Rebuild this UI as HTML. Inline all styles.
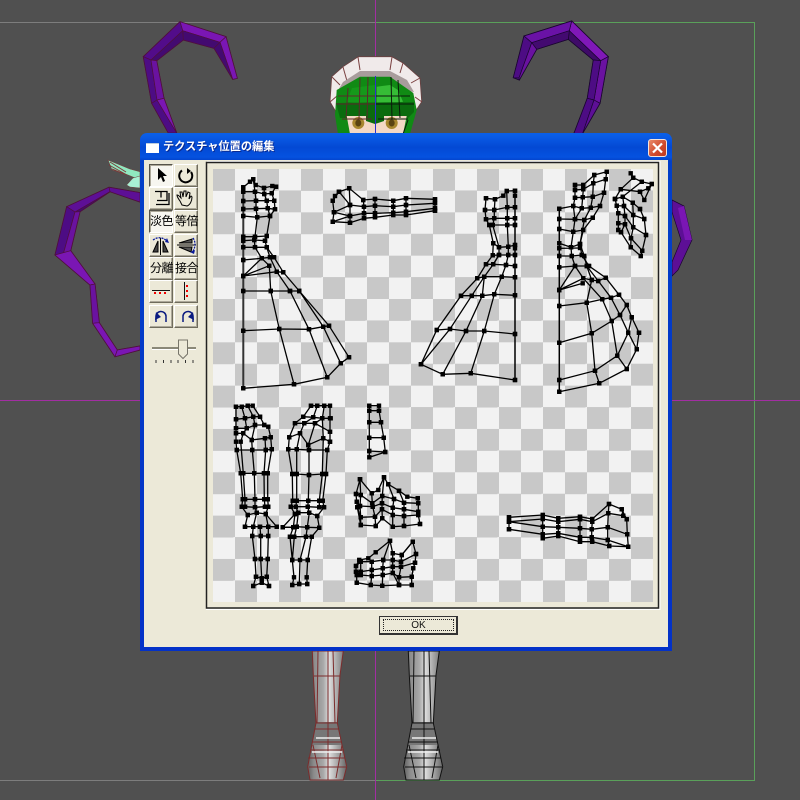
<!DOCTYPE html>
<html><head><meta charset="utf-8"><style>
html,body{margin:0;padding:0;background:#505050;width:800px;height:800px;overflow:hidden}
body{filter:blur(.3px)}
svg{position:absolute;left:0;top:0}
.m path{fill:none;stroke:#000;stroke-width:1.3;marker-start:url(#n);marker-mid:url(#n);marker-end:url(#n)}
.b{position:absolute;box-sizing:border-box;width:24px;height:23px;background:#ece9d8;border:1px solid;border-color:#fff #6f6c5c #6f6c5c #fff;box-shadow:inset -1px -1px 0 #aca899;font:12px/21px "Liberation Sans","Noto Sans CJK JP",sans-serif;text-align:center;color:#000;white-space:nowrap;letter-spacing:-.5px}
.p{background:#f7f6f0;border-color:#55534a #fff #fff #55534a;box-shadow:inset 1px 1px 0 #aca899}
</style></head><body>
<svg width="800" height="800" viewBox="0 0 800 800" style="z-index:1">
<defs>
<linearGradient id="lg" x1="0" x2="1" y1="0" y2="0"><stop offset="0" stop-color="#5f5f5f"/><stop offset=".15" stop-color="#8a8a8a"/><stop offset=".4" stop-color="#a8a8a8"/><stop offset=".55" stop-color="#dedede"/><stop offset=".85" stop-color="#909090"/><stop offset="1" stop-color="#666"/></linearGradient>
</defs>
<rect width="800" height="800" fill="#505050"/>
<path d="M0 22.5H375" stroke="#7d7d7d" fill="none"/>
<path d="M375 22.5H754.5V780.5H375" stroke="#5aa05a" fill="none"/>
<path d="M0 780.5H375" stroke="#7d7d7d" fill="none"/>
<path d="M375.5 0V800M0 400.5H800" stroke="#a22ea2" fill="none"/>

<!-- left upper horn -->
<polygon points="180,21.7 226,36.7 237.3,78.3 232.7,79.3 214,48.3 183.3,40 156.7,60.7 164,98.3 176.7,133 168.3,133 151.7,103.3 143.3,56.7" fill="#5d0f96" stroke="#50103c"/>
<g stroke="#50103c" stroke-width=".7">
<polygon points="180,21.7 226,36.7 220,42.3 182.7,30.7" fill="#7a16b4"/>
<polygon points="182.7,30.7 220,42.3 214,48.3 183.3,40" fill="#430a70"/>
<polygon points="226,36.7 237.3,78.3 232.7,79.3 220,42.3" fill="#7a16b4"/>
<polygon points="220,42.3 232.7,79.3 214,48.3" fill="#430a70"/>
<polygon points="143.3,56.7 180,21.7 182.7,30.7 151,60" fill="#520c8a"/>
<polygon points="151,60 182.7,30.7 183.3,40 156.7,60.7" fill="#430a70"/>
<polygon points="143.3,56.7 151,60 157,100 151.7,103.3" fill="#4d0c84"/>
<polygon points="151,60 156.7,60.7 164,98.3 157,100" fill="#6a12a0"/>
<polygon points="151.7,103.3 157,100 176.7,133 168.3,133" fill="#4d0c84"/>
<polygon points="157,100 164,98.3 176.7,133" fill="#7a16b4"/>
</g>
<!-- left lower horn -->
<polygon points="109,187.3 140,192.7 140,202 110,191.7 80,211.7 70.7,250.7 95,284 99.3,322.7 117.3,350 140,346 140,350 115,356.7 92.7,323.3 90,285 55,255 66.7,206.7" fill="#5d0f96" stroke="#50103c"/>
<g stroke="#50103c" stroke-width=".7">
<polygon points="109,187.3 140,192.7 140,202 110,191.7" fill="#5d0f96"/>
<polygon points="66.7,206.7 109,187.3 110,191.7 75,212" fill="#5d0f96"/>
<polygon points="75,212 110,191.7 80,211.7" fill="#430a70"/>
<polygon points="66.7,206.7 75,212 63,255 55,255" fill="#4d0c84"/>
<polygon points="75,212 80,211.7 70.7,250.7 63,255" fill="#6a12a0"/>
<polygon points="55,255 70.7,250.7 95,284 90,285" fill="#7a16b4"/>
<polygon points="90,285 95,284 99.3,322.7 92.7,323.3" fill="#6a12a0"/>
<polygon points="92.7,323.3 99.3,322.7 117.3,350 115,356.7" fill="#7a16b4"/>
<polygon points="115,356.7 117.3,350 140,346 140,350" fill="#7a16b4"/>
</g>
<!-- hand -->
<polygon points="108,160 130,169 140,171.7 140,180 128,175 112,170" fill="#90e8c0" stroke="#704040" stroke-width=".6"/>
<polygon points="126.7,185 133,178 140,176 140,188 130,187" fill="#a8f0d4" stroke="#704040" stroke-width=".5"/>
<path d="M110 162l16 10M109 165l18 10M112 169l12 5" stroke="#7a3a3a" fill="none"/>
<!-- right upper horn -->
<polygon points="571.7,21 608.3,56.7 600,103.3 582.7,133.3 574,133.3 587.3,98.3 593.3,60 568.3,39.3 536.7,49.3 519.3,80 513.3,77.7 524,36" fill="#5d0f96" stroke="#1a0530"/>
<g stroke="#1a0530" stroke-width=".7">
<polygon points="571.7,21 608.3,56.7 600.7,60.7 569.3,30.7" fill="#8018b8"/>
<polygon points="569.3,30.7 600.7,60.7 593.3,60 568.3,39.3" fill="#3f0a68"/>
<polygon points="524,36 571.7,21 569.3,30.7 531.7,42.7" fill="#6a12a6"/>
<polygon points="531.7,42.7 569.3,30.7 568.3,39.3 536.7,49.3" fill="#430a70"/>
<polygon points="524,36 531.7,42.7 519,78 513.3,77.7" fill="#4d0c84"/>
<polygon points="531.7,42.7 536.7,49.3 519.3,80 519,78" fill="#6a12a0"/>
<polygon points="600.7,60.7 608.3,56.7 600,103.3 594,100" fill="#6a12a0"/>
<polygon points="593.3,60 600.7,60.7 594,100 587.3,98.3" fill="#4d0c84"/>
<polygon points="587.3,98.3 594,100 582.7,133.3 574,133.3" fill="#4d0c84"/>
<polygon points="594,100 600,103.3 582.7,133.3" fill="#5d0f96"/>
</g>
<!-- right lower horn -->
<polygon points="672,200 684,206 692,240 678,270 672,276 672,262 681,240 672,212" fill="#5d0f96" stroke="#1a0530" stroke-width=".7"/>
<polygon points="684,206 692,240 685,240 678,208" fill="#7a16b4"/>

<!-- head -->
<polygon points="331.700,76.700 343,66.700 358.300,56.700 391.700,56.700 403,63 420,78 421.700,101.700 415,112 336,112 330,101.700" fill="#f0eaea" stroke="#6a4040" stroke-width=".8"/>
<path d="M343 67l4 14M358 57l2 13M392 57l-2 13M403 63l-3 10M420 78l-9 5M332 77l8 8M330 102l7-6M422 102l-7-5" stroke="#7a4040" fill="none"/>
<polygon points="343,82 360,71 390,71 407,80 414,92 360,84 337,92" fill="#a89c9c"/>
<polygon points="336.700,90 360,76.700 390,76.700 413.300,93 416.700,110 410,134 338,134 335,115" fill="#108a14"/>
<polygon points="376.700,86.700 390,85 398,90 403,101.700 376.700,105" fill="#36bc36"/>
<polygon points="346.700,101.700 352,88 375,85 375,105" fill="#15991a"/>
<polygon points="336,103 414,102 414,112 408,118 340,118" fill="#0b6b0e"/>
<polygon points="346.700,116 406.700,116 403,134 350,134" fill="#f4d8c4"/>
<polygon points="366,121 375,124 384,121 384,110 366,110" fill="#0b6b0e"/>
<ellipse cx="358.300" cy="123" rx="6" ry="6" fill="#a8862e"/><ellipse cx="358.300" cy="123" rx="3" ry="3.500" fill="#5a4212"/>
<ellipse cx="391.700" cy="123" rx="6" ry="6" fill="#a8862e"/><ellipse cx="391.700" cy="123" rx="3" ry="3.500" fill="#5a4212"/>
<path d="M348 88l-2 30M360 78l-1 41M368 77l-1 42M338 96h38M336 104h40M342 119h30" stroke="#5a2a2a" fill="none"/>
<path d="M376 96h34M376 104h38M378 119h30M391 77l1 42M398 80l2 38M408 120l-5 14" stroke="#0a1a0a" fill="none"/>
<path d="M375.500 76V134" stroke="#3030d0"/>

<!-- legs -->
<polygon points="312.3,651 343.3,651 340,675 337.3,723 346.7,766.7 343.3,780 310,780 307.7,766.7 316,723 313.3,675" fill="url(#lg)"/>
<polygon points="316,722 337,722 342,745 312,745" fill="#777"/>
<g fill="none" stroke="#7c2c2c">
<polygon points="312.3,651 343.3,651 340,675 337.3,723 346.7,766.7 343.3,780 310,780 307.7,766.7 316,723 313.3,675"/>
<path d="M314 676H340M316 723H338M315 729H339M312 742H342M310 750H344M308 758H345M309 767H346M318 651L317 723M328 651V780M333 651L335 723M313 745L320 778M342 745L336 778"/>
</g>
<path d="M316 738H340M312 752H342" stroke="#eee" stroke-width="1.500"/>
<polygon points="408.300,651 439.300,651 436,675 433.300,723 442.700,766.700 439.300,780 406,780 403.700,766.700 412,723 409.300,675" fill="url(#lg)"/>
<polygon points="412,722 433,722 438,745 408,745" fill="#777"/>
<g fill="none" stroke="#111">
<polygon points="408.300,651 439.300,651 436,675 433.300,723 442.700,766.700 439.300,780 406,780 403.700,766.700 412,723 409.300,675"/>
<path d="M410 676H436M412 723H434M411 729H435M408 742H438M406 750H440M404 758H441M405 767H442M414 651L413 723M424 651V780M429 651L431 723M409 745L416 778M438 745L432 778"/>
</g>
<path d="M412 738H436M408 752H438" stroke="#eee" stroke-width="1.500"/>
</svg>

<!-- dialog -->
<div style="position:absolute;z-index:2;left:140px;top:133px;width:532px;height:518px;box-sizing:border-box;border-radius:7px 7px 0 0;background:linear-gradient(#0a5fe8 0,#0a5ce6 3px,#0349d4 14px,#0552e0 24px,#0340c8 28px,#0331c8 100%)"></div>
<div style="position:absolute;z-index:2;left:144px;top:160px;width:524px;height:487px;background:#ece9d8"></div>
<div style="position:absolute;z-index:2;left:146px;top:143px;width:13px;height:9px;background:#fff;border-top:1px solid #bcd"></div>
<div style="position:absolute;z-index:2;left:163px;top:139px;font:bold 11.2px/16px 'Liberation Sans','Noto Sans CJK JP',sans-serif;color:#fff;text-shadow:1px 1px 0 #0a2a90;white-space:nowrap">テクスチャ位置の編集</div>
<div style="position:absolute;z-index:2;left:648px;top:139px;width:19px;height:18px;box-sizing:border-box;border:1px solid #f4e4dc;border-radius:3px;background:linear-gradient(135deg,#e88a6a,#d0482a 60%,#c03a20)"></div>
<svg width="800" height="800" style="z-index:3"><path d="M653 143.500L662 152.500M662 143.500L653 152.500" stroke="#fff" stroke-width="2.200"/></svg>

<!-- toolbar -->
<div style="z-index:3;position:absolute;left:0;top:0">
<div class="b p" style="left:149px;top:164px"></div><div class="b" style="left:174px;top:164px"></div>
<div class="b" style="left:149px;top:187px"></div><div class="b" style="left:174px;top:187px"></div>
<div class="b p" style="left:149px;top:210px">淡色</div><div class="b" style="left:174px;top:210px">等倍</div>
<div class="b" style="left:149px;top:234px"></div><div class="b" style="left:174px;top:234px"></div>
<div class="b" style="left:149px;top:257px">分離</div><div class="b" style="left:174px;top:257px">接合</div>
<div class="b" style="left:149px;top:280px"></div><div class="b" style="left:174px;top:280px"></div>
<div class="b" style="left:149px;top:305px"></div><div class="b" style="left:174px;top:305px"></div>
</div>
<svg width="800" height="800" style="z-index:4" fill="none">
<polygon points="158,168 158,180 161,177 163,182 165,181 163,176 167,176" fill="#000"/>
<path d="M182 170.500A6.500 6.500 0 1 0 191 172" stroke="#000" stroke-width="2"/><path d="M187 168l4 3-4 3z" fill="#000"/>
<path d="M155 191.500h6v6M160 191.500h7v9h-10M156 204.500h13V193" stroke="#000" stroke-width="1.300"/>
<path d="M180 201c-2-3-3-4-3-6 2 0 3 2 4 3l-1-6 2 0 1 5 1-6 2 0 0 6 2-5 2 1-1 6 2-3 1 1c0 4-2 8-5 9l-5-1z" stroke="#000"/>
<path d="M160.500 238v17" stroke="#000"/><path d="M158 241l-5 11h5zM163 241l5 11h-5z" stroke="#000" fill="#444"/>
<path d="M153 240q7-5 14 1" stroke="#0a1a9a" stroke-dasharray="2 1" stroke-width="1.300"/><path d="M167 238l2 5-4-1z" fill="#0a1a9a"/>
<path d="M177 245h19" stroke="#000"/><path d="M179 243l13-4v4zM179 247h13l-1 5z" stroke="#000" fill="#555"/>
<path d="M193 238q4 6 0 13" stroke="#0a1a9a" stroke-dasharray="2 1" stroke-width="1.300"/><path d="M190 252l5-2-1 4z" fill="#0a1a9a"/>
<path d="M152 290.500h18" stroke="#111"/><path d="M154 293h2M159 293h2M164 293h2" stroke="#e00" stroke-width="2"/>
<path d="M184.500 282v18" stroke="#111"/><path d="M187 285v2M187 290v2M187 295v2" stroke="#e00" stroke-width="2"/>
<path d="M156 322v-5a5 5 0 0 1 10-1v6" stroke="#0a1a80" stroke-width="1.500"/><path d="M156 312l5 5-6 3z" fill="#0a1a80"/>
<path d="M193 322v-5a5 5 0 0 0-10-1v6" stroke="#0a1a80" stroke-width="1.500"/><path d="M193 312l-5 5 6 3z" fill="#0a1a80"/>
<path d="M152 348h44" stroke="#8a8878" stroke-width="2"/><path d="M152 349.500h44" stroke="#fff"/>
<polygon points="178.500,340 187.500,340 187.500,354 183,358.500 178.500,354" fill="#ece9d8" stroke="#77756a"/>
<path d="M156 360v3M163.500 360v3M171 360v3M178 360v3M185.500 360v3M193 360v3" stroke="#333"/>
<path d="M207 161.500H660V609.500H206" stroke="#fff"/>
<rect x="206.500" y="162.500" width="452" height="445.500" stroke="#222" stroke-width="1.500"/>
</svg>

<!-- checker -->
<div style="position:absolute;z-index:3;left:212.500px;top:168.500px;width:440px;height:433.400px;background-color:#f2f2f2;background-image:conic-gradient(#f2f2f2 25%,#c8c8c8 0 50%,#f2f2f2 0 75%,#c8c8c8 0);background-size:44px 43.340px"></div>

<svg width="800" height="800" style="z-index:5">
<defs><marker id="n" markerUnits="userSpaceOnUse" markerWidth="6" markerHeight="6" refX="3" refY="3" overflow="visible"><rect x=".8" y=".8" width="4.400" height="4.400" fill="#000"/></marker></defs>
<g class="m">
<!-- A: left dress -->
<path d="M243.300 187.300V191.700V201V209V216V236.700V240.700V247.300V260V276V291V330.700V388.300" style="stroke-width:2;stroke:#333"/>
<path d="M243.300 187.300L250 181.700L253.300 179.300L255.700 185L264 188L272.300 186L276 186.700"/>
<path d="M243.300 191.700L255 191.700L264.300 194L271.700 193.300"/>
<path d="M243.300 201L256 200.700L266.700 200.700L274.300 200.700"/>
<path d="M243.300 209L256 208.700L267.700 208.300L275 209.300"/>
<path d="M243.300 216L257.300 217.300L270 216"/>
<path d="M253.300 179.300L255 191.700L256 200.700L256 208.700L257.300 217.300L255 236.700L254.300 240L255 247.300L261.700 258.300L269.300 265.700L270.700 291"/>
<path d="M264 188L264.300 194L266.700 200.700L267.700 208.300L270 216L266.700 236L265 240.700L266.700 247.300L270 257.300L276.700 271.700L290 291"/>
<path d="M276 186.700L271.700 193.300L274.300 200.700L275 209.300L270 216"/>
<path d="M243.300 236.700L255 236.700L266.700 236"/>
<path d="M243.300 240.700L254.300 240L265 240.700"/>
<path d="M243.300 247.300L255 247.300L266.700 247.300"/>
<path d="M243.300 260L261.700 258.300L270 257.300L274 257.300L283.300 272.300L299.300 291"/>
<path d="M243.300 276L261.700 258.300M243.300 276L269.300 265.700M243.300 276L276.700 271.700L283.300 272.300M266.700 247.300L274 257.300"/>
<path d="M243.300 291L270.700 291L290 291L299.300 291"/>
<path d="M243.300 330.700L279.300 329L309 329.300L323.300 326.700L329 325.700"/>
<path d="M243.300 388.300L294 384.300L327.300 377.300L340.700 363.300L349 357.300"/>
<path d="M270.700 291L279.300 329L294 384.300M290 291L309 329.300L327.300 377.300M299.300 291L323.300 326.700L340.700 363.300M299.300 291L329 325.700L349 357.300"/>
<!-- B: top middle -->
<path d="M332.700 200.700L335 196L339 191.700L349.300 188.300L363.300 200L375 199L393.300 200.700L406 198.300L435 199.300"/>
<path d="M334 212.300L350 205L364 206.700L375 205.700L393.300 206.700L406 205L435 203.300"/>
<path d="M350 216L364 213.300L375 213.300L393.300 212.700L406 211.700L435 208.300"/>
<path d="M332.700 221.700L350 222.700L364 218.300L375 217.300L393.300 215L406 215L435 210.700"/>
<path d="M339 191.700L332.700 200.700L334 212.300L332.700 221.700M349.300 188.300L350 205L350 216L350 222.700M363.300 200L364 206.700L364 213.300L364 218.300M375 199L375 205.700L375 213.300L375 217.300M393.300 200.700L393.300 206.700L393.300 212.700L393.300 215M406 198.300L406 205L406 211.700L406 215M435 199.300L435 203.300L435 208.300L435 210.700M334 212.300L350 216L332.700 221.700M339 191.700L350 205"/>
<!-- C: middle dress -->
<path d="M515 190.700V195.700V207.300V218.300V225V245V248.300V255V266V277.300V295.300V334V380" style="stroke-width:1.500"/>
<path d="M486 198.300L495 199.300L503.300 195.700L506.700 191L515 190.700"/>
<path d="M485 210L494.300 210L507.300 207.300L515 207.300"/>
<path d="M486 219.300L494.300 218.300L507.300 218.300L515 218.300"/>
<path d="M489.300 225L492.700 225L507.300 225L515 225"/>
<path d="M493.300 243.300L499 247.300L508.300 246.700L515 245"/>
<path d="M492.700 255.300L499 255L508.300 255L515 255"/>
<path d="M486 264.300L493.300 264.300L506 265L515 266"/>
<path d="M477.300 278.300L484.300 276.700L501.700 276.700L515 277.300"/>
<path d="M461 295.700L471.700 295.700L482.300 295.700L494.300 294.300L515 295.300"/>
<path d="M436.700 330L450 329L466 331L484.300 331L515 334"/>
<path d="M421 364.300L442.700 374.300L470.700 373.300L515 380"/>
<path d="M486 198.300L485 210L486 219.300L489.300 225L493.300 243.300L492.700 255.300L486 264.300L477.300 278.300L461 295.700L436.700 330L421 364.300"/>
<path d="M495 199.300L494.300 210L494.300 218.300L492.700 225L499 247.300L499 255L493.300 264.300L484.300 276.700L471.700 295.700L450 329L421 364.300"/>
<path d="M506.700 191L507.300 207.300L507.300 218.300L507.300 225L508.300 246.700L508.300 255L506 265L501.700 276.700L494.300 294.300L484.300 331L470.700 373.300"/>
<path d="M499 255L493.300 264.300M482.300 295.700L466 331L442.700 374.300M484.300 276.700L482.300 295.700"/>
<!-- D: right dress -->
<path d="M559.300 208.700V219V229V243.300V248.300V256V267.300V290V306V342.700V380V391.700" style="stroke-width:1.500"/>
<path d="M606.700 171.700L594.300 175L583.300 185L575 185"/>
<path d="M605.700 179.300L593.300 183.300L583.300 189.300L575 190"/>
<path d="M604 192.700L592.700 196.700L582.700 197.300L575 197.700"/>
<path d="M600 206L590.700 207.700L581.700 208.300L573.300 206L559.300 208.700"/>
<path d="M592.700 217.700L584.300 220L575 219.300L559.300 219"/>
<path d="M583.300 230L573.300 231.700L559.300 229"/>
<path d="M580 244L571 247.300L559.300 243.300M580 248L559.300 248.300"/>
<path d="M584.300 256L581.700 255L571.700 256L559.300 256"/>
<path d="M559.300 267.300L575 266L586.700 266L589 266"/>
<path d="M559.300 290L583.300 278.300L591.700 280L598.300 281L605.700 277.700M559.300 290L582.700 283.300M559.300 290L575 266"/>
<path d="M559.300 306L586.700 302.700L602.300 299.300L611 297.700L619 294.700"/>
<path d="M559.300 342.700L591.700 333.300L611.700 321L620 315L626.700 305"/>
<path d="M559.300 380L595 370.700L617.300 355.700L628.300 332.700L631.700 317.300"/>
<path d="M559.300 391.700L599.300 383.300L626.700 369L636.700 349.300L639 332.700"/>
<path d="M606.700 171.700L605.700 179.300L604 192.700L600 206L592.700 217.700L583.300 230L580 244L581.700 255L589 266L605.700 277.700L619 294.700L626.700 305L631.700 317.300L639 332.700"/>
<path d="M594.300 175L593.300 183.300L592.700 196.700L590.700 207.700L584.300 220L580 244L584.300 256L586.700 266L598.300 281L611 297.700L620 315L628.300 332.700L636.700 349.300"/>
<path d="M583.300 185L583.300 189.300L582.700 197.300L581.700 208.300L575 219.300L573.300 231.700L571 247.300L571.700 256L575 266L583.300 278.300L602.300 299.300L611.700 321L617.300 355.700L626.700 369"/>
<path d="M575 185L575 190L575 197.700L573.300 206L575 219.300M586.700 266L591.700 280L586.700 302.700L591.700 333.300L595 370.700L599.300 383.300"/>
<!-- E: top right flap -->
<path d="M630.700 173.300L633.300 177.700L641.700 181.700L651.700 184"/>
<path d="M620.700 189.300L640 191.700L648.300 188.300L651.700 184L644.300 200L640 191.700"/>
<path d="M615 199L622.700 196.700L632.700 202.700L640 209"/>
<path d="M620.700 189.300L633.300 177.700M615 199L620.700 189.300M622.700 196.700L641.700 181.700"/>
<path d="M616.700 205.700L624 206L633.300 215L644.300 219"/>
<path d="M618.300 213.300L625 216L633.300 227.300L646 235"/>
<path d="M618.300 223.300L625 224.300L631 238.300L642.300 250.700"/>
<path d="M618.300 230L621 232.300L630.700 247.300L640.700 256"/>
<path d="M615 199L616.700 205.700L618.300 213.300L618.300 223.300L618.300 230"/>
<path d="M622.700 196.700L624 206L625 216L625 224.300L621 232.300"/>
<path d="M632.700 202.700L633.300 215L633.300 227.300L631 238.300L630.700 247.300"/>
<path d="M640 209L644.300 219L646 235L642.300 250.700L640.700 256"/>
<!-- F: lower right -->
<path d="M509 517.300L542.700 515L558.300 518.300L580 516.700L592.300 519L609 504L621.700 509.300L626.700 519.300L627.300 534.300L628.300 546.700"/>
<path d="M509 521.700L542.700 519L558.300 521.700L580 519.300L592.300 521.700L608.300 513.300L623.300 515.700"/>
<path d="M509 521.700L542.700 526.700L558.300 527.300L580 528.300L591.700 529.300L607.700 527.300L627.300 534.300"/>
<path d="M509 529.300L542.700 534.300L558.300 533.300L580 537.300L591.700 537.300L607.700 540L628.300 546.700"/>
<path d="M542.700 538.300L558.300 536L580 541.700L592.300 541.700L609.300 546L628.300 546.700"/>
<path d="M509 517.300V521.700V529.300M542.700 515V519V526.700V534.300V538.300M558.300 518.300V521.700V527.300V533.300V536M580 516.700V519.300V528.300V537.300V541.700M592.300 519V521.700L591.700 529.300V537.300L592.300 541.700M609 504L608.300 513.300L607.700 527.300V540L609.300 546M621.700 509.300L623.300 515.700L626.700 519.300"/>
<!-- G: small strip -->
<path d="M369.300 405.700V410.700V422.300V437.700V451V457.300L385.300 452L383.700 437.700L381 422.300L379 410.700V405.700H369.300M369.300 410.700H379M369.300 422.300H381M369.300 437.700H383.700M369.300 451L385.300 452"/>
<!-- H: leg 1 -->
<path d="M236 406.700L241.700 406.700L247.700 405.700L252.700 405.700L260 416.700L264.300 425L268.300 426.700L270.700 437.300L271.700 449.300"/>
<path d="M236 419.300L245 418.300L253.300 416.700L260 416.700"/>
<path d="M236 428.300L246.700 428.300L255 425L264.300 425"/>
<path d="M236 433.300L243.300 433.300L251.700 440L265 438.300L270.700 437.300"/>
<path d="M236 406.700V419.300V428.300V433.300V441.700L236.700 450L240.700 473.300L242.700 499.300L241.700 506.700L247.700 515L245 526.700"/>
<path d="M241.700 406.700L245 418.300L246.700 428.300L243.300 433.300L240.700 441.700L243.300 473.300L245 499.300L245 506.700"/>
<path d="M247.700 405.700L253.300 416.700L255 425L251.700 440L252.300 450L254.300 473.300L255 499.300L255 507.300L256.700 512.700L253.300 526.700"/>
<path d="M271.700 449.300L267.700 473.300L267.700 499.300L268.300 506.700L265.700 514L268.300 526.700"/>
<path d="M265.700 450L264 473.300L264.300 499.300L265 506.700M265 438.300L265.700 450"/>
<path d="M236.700 450L252.300 450L265.700 450L271.700 449.300"/>
<path d="M240.700 473.300L243.300 473.300L254.300 473.300L264 473.300L267.700 473.300"/>
<path d="M242.700 499.300L245 499.300L255 499.300L264.300 499.300L267.700 499.300"/>
<path d="M241.700 506.700L245 506.700L255 507.300L265 506.700L268.300 506.700"/>
<path d="M247.700 515L256.700 512.700L265.700 514"/>
<path d="M245 526.700L253.300 526.700L260 526.700L268.300 526.700L276.700 526.700M265.700 514L276.700 526.700"/>
<path d="M253.300 526.700L252.300 536L255 559L256 576.700L253.300 586"/>
<path d="M260 526.700L260.700 536L260.700 559L261.700 578.300L261.700 582.700"/>
<path d="M268.300 526.700V536L267.700 559L266.700 576.700L269 586"/>
<path d="M252.300 536L260.700 536L268.300 536M255 559L260.700 559L267.700 559M256 576.700L261.700 578.300L266.700 576.700M253.300 586L261.700 582.700L269 586"/>
<!-- I: leg 2 -->
<path d="M311 405.700L317.300 405.700L324.300 405.700L330 405.700V418.300L330 431.700L330 441.700L327.300 450L326 474L322.700 500.700L324 507.300L317.300 516L319.300 527.700"/>
<path d="M311 405.700L303.300 416.700L295 423.300L289.300 437.300L288.300 449.300L292.300 474L292.700 500.700L290.700 506.700L295 514L293.300 527.300L282.700 527.300"/>
<path d="M303.300 416.700L313.300 417.300L322.300 418.300L330.700 418.300"/>
<path d="M295 423.300L304.300 423.300L315 423.300L330 431.700"/>
<path d="M289.300 437.300L300 433.300L308.300 445L323.300 438.300L330 441.700"/>
<path d="M288.300 449.300L296.700 449.300L309 450L327.300 450"/>
<path d="M292.300 474L296.700 474L309 475L322.300 474L326 474"/>
<path d="M292.700 500.700L296.700 500.700L308.300 500.700L319.300 500.700L322.700 500.700"/>
<path d="M290.700 506.700L295.700 506.700L307.700 506.700L319.300 507.300L324 507.300"/>
<path d="M295 514L298.300 512.700L309.300 512.700L317.300 516"/>
<path d="M282.700 527.300L293.300 527.300L296.700 526.700L307.300 527.300L319.300 527.700M282.700 527.300L295 514"/>
<path d="M317.300 405.700L313.300 417.300L304.300 423.300L300 433.300L296.700 449.300V474V500.700L295.700 506.700L298.300 512.700L296.700 526.700"/>
<path d="M324.300 405.700L322.300 418.300L315 423.300L308.300 445L309 450V475L308.300 500.700L307.700 506.700L309.300 512.700L307.300 527.300"/>
<path d="M322.300 418.300L323.300 438.300L322.300 474L319.300 500.700L319.300 507.300"/>
<path d="M290 536.700L294.300 536.700L306 536.700L311.700 536.700M293.300 527.300L290 536.700L292.300 560L294 577.300L292.300 585M296.700 526.700L294.300 536.700L292.300 560M307.300 527.300L306 536.700L300 560L299.300 584M319.300 527.700L311.700 536.700L307.700 560L306.700 577.300L307.300 584M292.300 560H307.700M292.300 585L299.300 584L307.300 584"/>
<!-- J: shape 1 -->
<path d="M360 479.300L371.700 493.300L378.300 490L384 477.300L388.300 484.300L399 490.700L407.300 496.700L417.700 498.300"/>
<path d="M356 494L360.700 495L372.300 503.300L382.300 496L394 499L404 502.700L418.300 503.300"/>
<path d="M356.700 501.700L360 506L372.700 506.700L382 503.300L392.700 507.700L404 509.300L418.300 511.700"/>
<path d="M357.300 507.300L360.700 517.300L375 516.700L382 509.300L392.700 515L404 516L418.300 515"/>
<path d="M360.700 525L375.700 526L382.300 518.300L392.700 526.700L404 526L420 524"/>
<path d="M360 479.300L356 494L356.700 501.700L357.300 507.300L360.700 525M360 479.300L360.700 495L360 506L360.700 517.300L360.700 525M371.700 493.300L372.300 503.300L372.700 506.700L375 516.700L375.700 526M384 477.300L382.300 496L382 503.300L382 509.300L382.300 518.300M388.300 484.300L394 499L392.700 507.700L392.700 515L392.700 526.700M399 490.700L404 502.700L404 509.300L404 516L404 526M417.700 498.300L418.300 503.300L418.300 511.700L418.300 515L420 524"/>
<!-- K: shape 2 -->
<path d="M359.300 560L368.300 558.300L375.700 552.300L390 540.700L392.700 553.300L401.700 555L412.700 541.700"/>
<path d="M356 566L360.700 561.700L371.700 561.700L383.300 560L392.700 560L401 561.700L416 554"/>
<path d="M356 571.700L360.700 571.700L371.700 570L382.700 568.300L392.700 566.700L401 566.700L415 562.700"/>
<path d="M356.700 575L360.700 575L371.700 576L382.700 575L392.700 573L399 577.300L411.700 576.700L413.300 568.300"/>
<path d="M356.700 582.700L370.700 585L382.300 585.700L399 585L411.700 585"/>
<path d="M359.300 560L356 566L356 571.700L356.700 575L356.700 582.700M360.700 561.700V571.700V575M371.700 561.700V570V576L370.700 585M383.300 560L382.700 568.300V575L382.300 585.700M392.700 553.300V560V566.700V573L399 585M390 540.700L383.300 560M401.700 555L401 561.700V566.700L399 577.300V585M412.700 541.700L416 554L415 562.700L413.300 568.300L411.700 576.700V585M412.700 541.700L401.700 555"/>
</g>
</svg>

<!-- OK -->
<div style="position:absolute;z-index:6;left:379px;top:616px;width:79px;height:19px;box-sizing:border-box;background:#ece9d8;border:1px solid #333;border-width:1px 2px 2px 1px"></div>
<div style="position:absolute;z-index:6;left:383px;top:619px;width:71px;height:12px;box-sizing:border-box;border:1px dotted #222;font:10px/11px 'Liberation Sans',sans-serif;text-align:center;color:#111">OK</div>
</body></html>
